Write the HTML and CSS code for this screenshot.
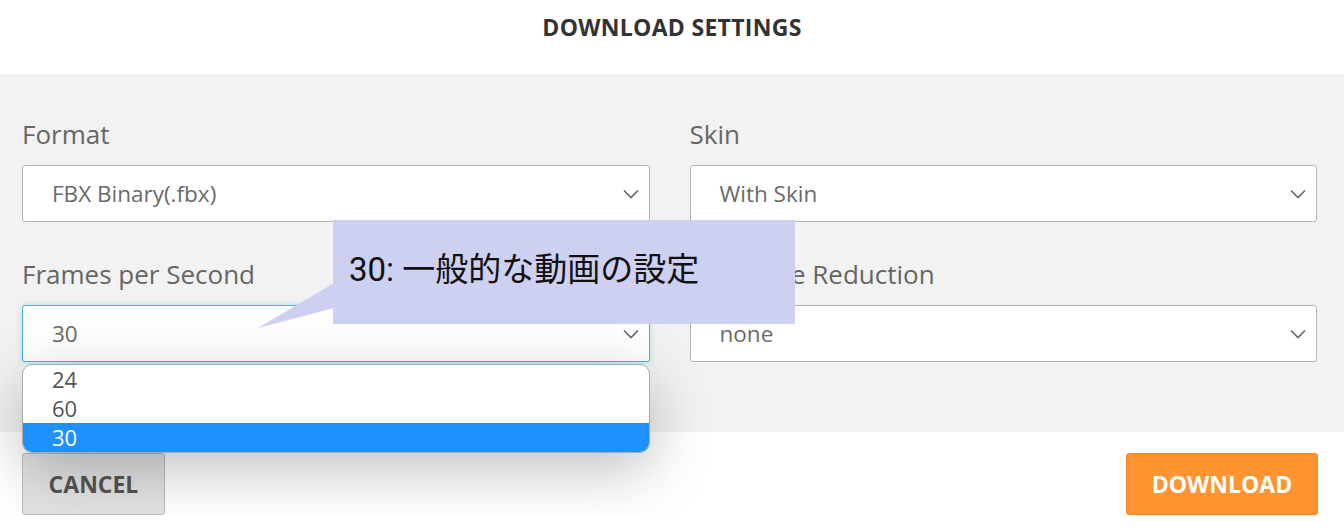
FILE: index.html
```html
<!DOCTYPE html>
<html lang="en">
<head>
    <meta charset="UTF-8">
    <meta name="viewport" content="width=device-width, initial-scale=1.0">
    <title>Download Settings</title>
    <link rel="stylesheet" href="styles.css">
</head>
<body>
    <header class="dialog-title">DOWNLOAD SETTINGS</header>

    <section class="dialog-body">
        <div class="field">
            <label class="field-label">Format</label>
            <div class="select-box">
                <span>FBX Binary(.fbx)</span>
                <svg class="chevron" width="16" height="10" viewBox="0 0 16 10"><path d="M1 1.5 L8 8.5 L15 1.5" fill="none" stroke="#666" stroke-width="1.6"/></svg>
            </div>
        </div>
        <div class="field">
            <label class="field-label">Skin</label>
            <div class="select-box">
                <span>With Skin</span>
                <svg class="chevron" width="16" height="10" viewBox="0 0 16 10"><path d="M1 1.5 L8 8.5 L15 1.5" fill="none" stroke="#666" stroke-width="1.6"/></svg>
            </div>
        </div>
        <div class="field">
            <label class="field-label">Frames per Second</label>
            <div class="select-box focused">
                <span>30</span>
                <svg class="chevron" width="16" height="10" viewBox="0 0 16 10"><path d="M1 1.5 L8 8.5 L15 1.5" fill="none" stroke="#666" stroke-width="1.6"/></svg>
                <ul class="option-list">
                    <li>24</li>
                    <li>60</li>
                    <li class="selected">30</li>
                </ul>
            </div>
        </div>
        <div class="field">
            <label class="field-label">Keyframe Reduction</label>
            <div class="select-box">
                <span>none</span>
                <svg class="chevron" width="16" height="10" viewBox="0 0 16 10"><path d="M1 1.5 L8 8.5 L15 1.5" fill="none" stroke="#666" stroke-width="1.6"/></svg>
            </div>
        </div>
    </section>

    <footer class="dialog-actions">
        <button class="btn btn-cancel">CANCEL</button>
        <button class="btn btn-download">DOWNLOAD</button>
    </footer>

    <div class="callout">
        <svg class="callout-tail" width="76" height="46" viewBox="0 0 76 46"><polygon points="76,0 76,25 0,45" fill="#cdd0f0"/></svg>
        30: 一般的な動画の設定
    </div>
</body>
</html>
```

FILE: styles.css
```css
body {
    margin: 0;
    font-family: "Open Sans", "Noto Sans", sans-serif;
    background: #fff;
    overflow: hidden;
}
.dialog-title {
    height: 74px;
    display: flex;
    align-items: center;
    justify-content: center;
    padding-bottom: 20px;
    box-sizing: border-box;
    font-size: 23px;
    font-weight: bold;
    color: #333;
    letter-spacing: 0.3px;
}
.dialog-body {
    background: #f2f2f2;
    display: grid;
    grid-template-columns: 1fr 1fr;
    column-gap: 40px;
    row-gap: 37px;
    padding: 45px 27px 70px 22px;
}
.field-label {
    display: block;
    font-size: 26px;
    line-height: 30px;
    color: #666;
    margin-bottom: 16px;
}
.select-box {
    position: relative;
    height: 57px;
    box-sizing: border-box;
    border: 1px solid #b5b5b5;
    border-radius: 3px;
    background: #fff;
    display: flex;
    align-items: center;
    justify-content: space-between;
    padding: 0 10px 0 29px;
    font-size: 22.5px;
    color: #6a6a6a;
}
.select-box.focused {
    border-color: #4fb9d6;
    box-shadow: 0 0 5px rgba(79, 185, 214, 0.45);
}
.chevron {
    display: block;
}
.option-list {
    position: absolute;
    top: 58px;
    left: -1px;
    right: -1px;
    margin: 0;
    padding: 0;
    list-style: none;
    background: #fff;
    border: 1px solid #aaa;
    border-radius: 10px;
    overflow: hidden;
    box-shadow: 0 16px 60px rgba(0, 0, 0, 0.26);
    z-index: 2;
}
.option-list li {
    height: 29px;
    line-height: 29px;
    padding-left: 29px;
    font-size: 22px;
    color: #555;
}
.option-list li.selected {
    background: #1e90ff;
    color: #fff;
}
.dialog-actions {
    display: flex;
    justify-content: space-between;
    padding: 21px 26px 0 22px;
}
.btn {
    height: 62px;
    border-radius: 3px;
    font-family: "Open Sans", "Noto Sans", sans-serif;
    font-size: 23px;
    font-weight: bold;
    cursor: pointer;
}
.btn-cancel {
    width: 143px;
    background: #e2e2e2;
    border: 1px solid #bbb;
    color: #555;
}
.btn-download {
    width: 192px;
    background: #ff9430;
    border: 1px solid #f7871c;
    color: #fff;
}
.callout {
    position: absolute;
    left: 333px;
    top: 220px;
    width: 462px;
    height: 104px;
    box-sizing: border-box;
    background: #cdd0f0;
    padding: 30px 0 0 16px;
    font-family: Roboto, "Noto Sans CJK JP", sans-serif;
    font-size: 33px;
    line-height: 40px;
    color: #111;
    z-index: 3;
}
.callout-tail {
    position: absolute;
    left: -75px;
    top: 63px;
}
```
